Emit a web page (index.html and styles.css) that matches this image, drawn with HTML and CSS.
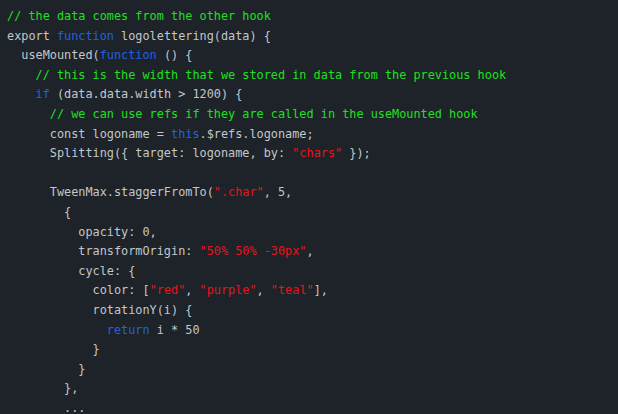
FILE: index.html
```html
<!DOCTYPE html>
<html>
<head>
<meta charset="utf-8">
<link rel="stylesheet" href="styles.css">
</head>
<body>
<pre class="code"><span class="c">// the data comes from the other hook</span>
export <span class="k">function</span> logolettering(data) {
  useMounted(<span class="k">function</span> () {
    <span class="c">// this is the width that we stored in data from the previous hook</span>
    <span class="k">if</span> (data.data.width &gt; 1200) {
      <span class="c">// we can use refs if they are called in the useMounted hook</span>
      const logoname = <span class="k">this</span>.$refs.logoname;
      Splitting({ target: logoname, by: <span class="s">"chars"</span> });

      TweenMax.staggerFromTo(<span class="s">".char"</span>, 5,
        {
          opacity: 0,
          transformOrigin: <span class="s">"50% 50% -30px"</span>,
          cycle: {
            color: [<span class="s">"red"</span>, <span class="s">"purple"</span>, <span class="s">"teal"</span>],
            rotationY(i) {
              <span class="k">return</span> i * 50
            }
          }
        },
        ...</pre>
</body>
</html>
```
FILE: styles.css
```css
html, body {
  margin: 0;
  padding: 0;
  background: #1d2328;
  overflow: hidden;
}
.code {
  margin: 0;
  padding: 7px 7px;
  font-family: "DejaVu Sans Mono", "Liberation Mono", monospace;
  font-size: 11.85px;
  line-height: 19.6px;
  color: #c3c7cb;
  white-space: pre;
}
.c { color: #1fe01f; }
.k { color: #1f62e0; }
.s { color: #e8141c; }
```
